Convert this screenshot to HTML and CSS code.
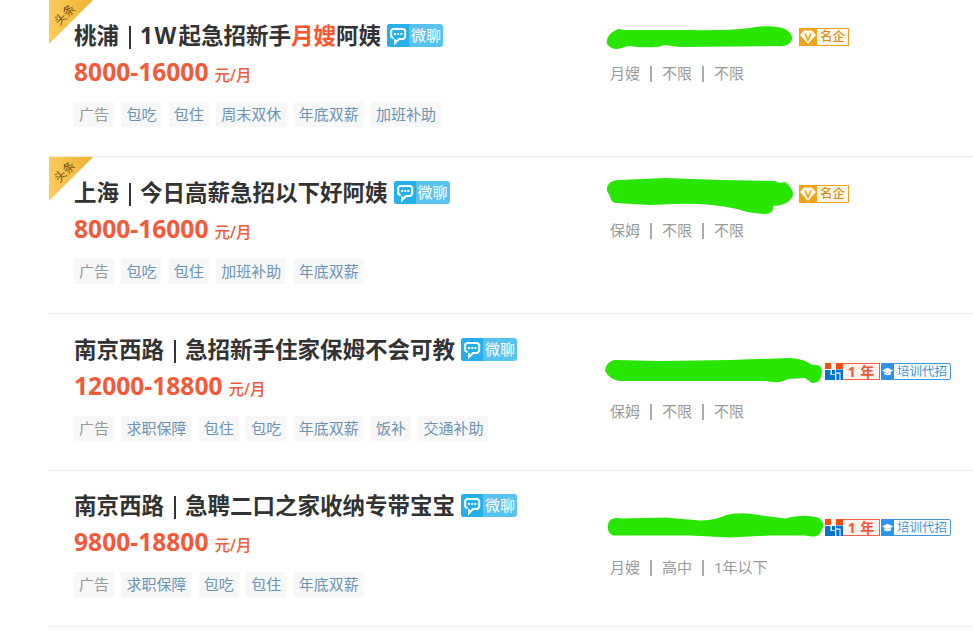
FILE: index.html
```html
<!DOCTYPE html>
<html lang="zh-CN">
<head>
<meta charset="utf-8">
<title>招聘列表</title>
<link rel="stylesheet" href="styles.css">
</head>
<body>
<svg class="defs" aria-hidden="true">
  <defs>
    <linearGradient id="gold" x1="0" y1="0" x2="1" y2="0"><stop offset="0" stop-color="#fdcc5e"/><stop offset="1" stop-color="#eeb02f"/></linearGradient>
  </defs>
  <symbol id="chat" viewBox="0 0 22 23"><path d="M6.5 14.5L4.2 12.5V6.5L5.8 5H16.5L18.2 6.5V13L16.5 15H12L8 19V15.2" fill="none" stroke="#fff" stroke-width="2"/><path d="M7 9h2v2H7zM10.2 9h2v2h-2zM13.4 9h2v2h-2z" fill="#fff"/></symbol>
  <symbol id="gem" viewBox="0 0 18 18"><path d="M5 2.5H13L17 7L9 16L1 7Z" fill="#fff8e8"/><path d="M6 5.5L9 12L12 5.5" fill="none" stroke="#f0a318" stroke-width="1.7"/></symbol>
  <symbol id="blocks" viewBox="0 0 18 17"><path d="M0 0H6V6H0zM11 0H18V6H11z" fill="#ff4b0b"/><path d="M0 7H5.5V12H10V17H0zM11 6.5H18V17H15.5V9.5H11z" fill="#0872cc"/><path d="M7 7H10V10.8H14.5V17H11.3V11.2H7z" fill="#0872cc"/></symbol>
  <symbol id="cap" viewBox="0 0 13 17"><path d="M1 7.5L6.5 4.8L12.3 7.5L6.5 10.2Z" fill="#fff"/><path d="M3.3 9L6.5 10.6L10 9V11.2Q6.5 13.2 3.3 11.2Z" fill="#fff"/></symbol>
</svg>
<ul class="jobs">
  <li class="job">
    <div class="ribbon"><svg width="44" height="44"><path d="M0 0H44L0 44Z" fill="url(#gold)"/></svg><span>头条</span></div>
    <div class="main">
      <h2 class="title"><span>桃浦</span><i class="bar"></i><span class="latin">1W</span><span>起急招新手<em>月嫂</em>阿姨</span><span class="chat"><svg><use href="#chat"/></svg><b>微聊</b></span></h2>
      <p class="salary">8000-16000<small>元/月</small></p>
      <div class="tags"><span class="ad">广告</span><span>包吃</span><span>包住</span><span>周末双休</span><span>年底双薪</span><span>加班补助</span></div>
    </div>
    <div class="side">
      <div class="company"><svg class="mask" width="199" height="46" viewBox="600 14 199 46"><path d="M607 44Q605 35 618 29L625 30H690Q724 31 750 28Q772 24 785 29Q796 36 790 43Q785 47 776 46L680 47L665 45Q655 49 627 46Q614 53 607 44Z"/></svg><span class="famous"><svg><use href="#gem"/></svg><b>名企</b></span></div>
      <div class="meta"><span>月嫂</span><span>不限</span><span>不限</span></div>
    </div>
  </li>
  <li class="job">
    <div class="ribbon"><svg width="44" height="44"><path d="M0 0H44L0 44Z" fill="url(#gold)"/></svg><span>头条</span></div>
    <div class="main">
      <h2 class="title"><span>上海</span><i class="bar"></i><span>今日高薪急招以下好阿姨</span><span class="chat"><svg><use href="#chat"/></svg><b>微聊</b></span></h2>
      <p class="salary">8000-16000<small>元/月</small></p>
      <div class="tags"><span class="ad">广告</span><span>包吃</span><span>包住</span><span>加班补助</span><span>年底双薪</span></div>
    </div>
    <div class="side">
      <div class="company"><svg class="mask" width="199" height="46" viewBox="600 171 199 46"><path d="M607 191Q606 181 619 180L665 178L720 180L775 181Q778 184 785 182Q793 188 793 195Q790 205 773 206Q774 214 765 214Q748 213 737 209Q710 203 675 204L650 205L616 203Q611 203 610 196Z"/></svg><span class="famous"><svg><use href="#gem"/></svg><b>名企</b></span></div>
      <div class="meta"><span>保姆</span><span>不限</span><span>不限</span></div>
    </div>
  </li>
  <li class="job">
    <div class="main">
      <h2 class="title"><span>南京西路</span><i class="bar"></i><span>急招新手住家保姆不会可教</span><span class="chat"><svg><use href="#chat"/></svg><b>微聊</b></span></h2>
      <p class="salary">12000-18800<small>元/月</small></p>
      <div class="tags"><span class="ad">广告</span><span>求职保障</span><span>包住</span><span>包吃</span><span>年底双薪</span><span>饭补</span><span>交通补助</span></div>
    </div>
    <div class="side low">
      <div class="company"><svg class="mask" width="225" height="46" viewBox="600 348 225 46"><path d="M605 371Q606 362 614 360L660 361L730 360L790 358Q805 359 812 365Q822 363 822 372Q821 384 812 383L805 378L788 379Q780 384 765 381L620 381Q610 380 605 371Z"/></svg><span class="years"><svg><use href="#blocks"/></svg><b>1 年</b></span><span class="train"><svg><use href="#cap"/></svg><b>培训代招</b></span></div>
      <div class="meta"><span>保姆</span><span>不限</span><span>不限</span></div>
    </div>
  </li>
  <li class="job last">
    <div class="main">
      <h2 class="title"><span>南京西路</span><i class="bar"></i><span>急聘二口之家收纳专带宝宝</span><span class="chat"><svg><use href="#chat"/></svg><b>微聊</b></span></h2>
      <p class="salary">9800-18800<small>元/月</small></p>
      <div class="tags"><span class="ad">广告</span><span>求职保障</span><span>包吃</span><span>包住</span><span>年底双薪</span></div>
    </div>
    <div class="side low">
      <div class="company"><svg class="mask" width="225" height="46" viewBox="600 504.5 225 46"><path d="M609 522Q612 517 622 519L665 518L700 521Q714 521 725 516Q737 512 755 515L785 519Q802 514 818 518Q826 523 822 530Q819 538 812 537L805 536L770 536L730 538L690 536H613Q605 532 609 522Z"/></svg><span class="years"><svg><use href="#blocks"/></svg><b>1 年</b></span><span class="train"><svg><use href="#cap"/></svg><b>培训代招</b></span></div>
      <div class="meta"><span>月嫂</span><span>高中</span><span>1年以下</span></div>
    </div>
  </li>
</ul>
</body>
</html>
```
FILE: styles.css
```css
* { box-sizing: border-box; }
body {
  margin: 0;
  background: #fff;
  overflow: hidden;
  font-family: "Noto Sans", "Noto Sans CJK SC", sans-serif;
}
.defs { position: absolute; width: 0; height: 0; }
.jobs { margin: 0 0 0 49px; padding: 0; list-style: none; }
.job {
  position: relative;
  display: flex;
  height: 157px;
  padding-left: 25px;
  border-bottom: 1px solid #ececec;
}
.last { height: 156px; }
.ribbon { position: absolute; left: 0; top: 0; width: 44px; height: 44px; }
.ribbon svg { display: block; }
.ribbon span {
  position: absolute;
  left: 1px;
  top: 6px;
  width: 30px;
  font-size: 12px;
  line-height: 18px;
  text-align: center;
  color: #735018;
  transform: rotate(-45deg);
}
.main { width: 536px; flex: none; padding-top: 20px; }
.last .main { padding-top: 19px; }
.title {
  display: flex;
  align-items: center;
  height: 32px;
  margin: 0;
  font-size: 22.5px;
  line-height: 32px;
  font-weight: 700;
  color: #333;
  white-space: nowrap;
}
.title em { font-style: normal; color: #ff552e; }
.latin { width: 38.5px; letter-spacing: 1.5px; }
.bar { width: 2px; height: 23px; margin: 2px 9.5px 0; background: #333; }
.chat {
  display: flex;
  width: 56px;
  height: 23px;
  margin: 0 0 1px 6px;
  border-radius: 3px;
  overflow: hidden;
  background: #58c3ee;
}
.chat svg { width: 22px; height: 23px; background: #25b0ea; }
.chat b {
  flex: 1;
  font-size: 15px;
  line-height: 22px;
  font-weight: 400;
  text-align: center;
  color: #fff;
}
.salary {
  display: flex;
  align-items: baseline;
  height: 34px;
  margin: 3px 0 13px;
  font-size: 24.6px;
  line-height: 34px;
  font-weight: 700;
  color: #f25a3a;
}
.salary small { margin-left: 6px; font-size: 15.5px; font-weight: 500; }
.tags { display: flex; gap: 7.4px; }
.tags span {
  height: 25px;
  padding: 0 5px;
  font-size: 15px;
  line-height: 25px;
  color: #6d93b5;
  background: #f7f7f7;
  white-space: nowrap;
}
.tags .ad { color: #999; }
.side { padding-top: 14px; }
.low { padding-top: 34px; }
.last .low { padding-top: 33px; }
.company { display: flex; align-items: center; height: 46px; margin-left: -10px; }
.mask { flex: none; fill: #28e502; }
.famous, .years, .train { display: flex; flex: none; white-space: nowrap; }
.famous { width: 50px; height: 18px; border: 1px solid #f0a318; background: #fff8e8; }
.famous svg { width: 18px; height: 18px; margin: -1px 0 0 -1px; background: #f0a318; }
.famous b { flex: 1; font-size: 12.5px; line-height: 16px; font-weight: 500; text-align: center; color: #dd8d17; }
.years { height: 17px; width: 55px; }
.years svg { width: 18px; height: 17px; }
.years b { flex: 1; border: 1px solid #ec6546; border-left: 0; background: #fff1ee; font-size: 14px; line-height: 15px; word-spacing: 1px; text-align: center; color: #e85937; }
.train { width: 70px; height: 17px; margin-left: 1px; border: 1px solid #4096dc; border-radius: 2px; }
.train svg { width: 13px; height: 17px; margin: -1px 0 0 -1px; background: #2c93e8; }
.train b { flex: 1; font-size: 12.5px; line-height: 15px; font-weight: 400; text-align: center; color: #3a93dc; }
.meta { display: flex; height: 26px; font-size: 15px; line-height: 26px; color: #999; }
.low .meta { margin-top: 4px; }
.meta span { display: flex; align-items: center; }
.meta span + span::before { content: ""; width: 1.5px; height: 16px; margin: 2px 10.5px 0 10px; background: #aaa; }
```
